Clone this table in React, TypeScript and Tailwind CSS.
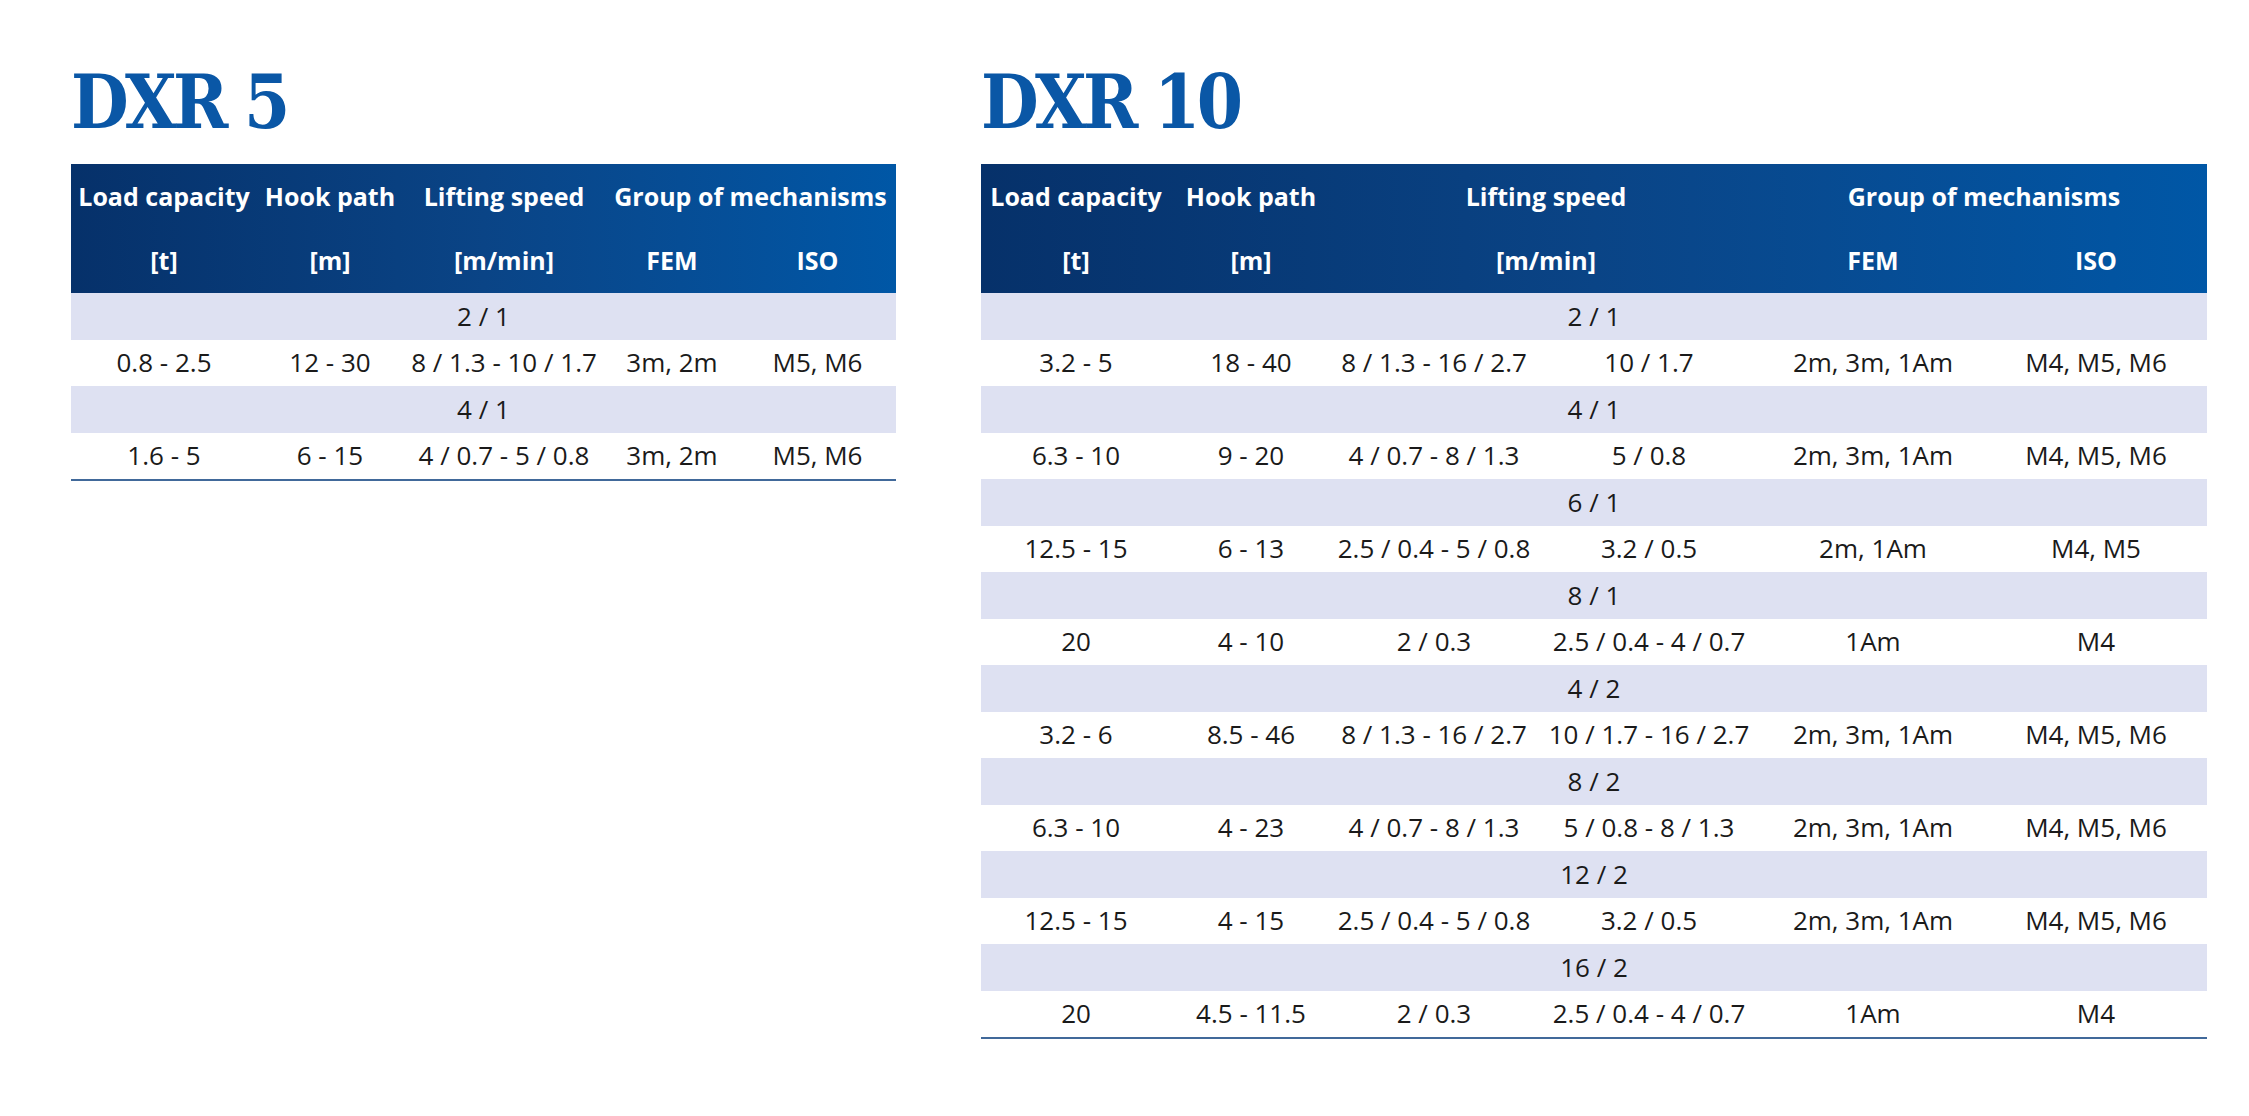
import React from 'react';

type Group = { ratio: string; cells: string[] };

const dxr5: Group[] = [
  { ratio: '2 / 1', cells: ['0.8 - 2.5', '12 - 30', '8 / 1.3 - 10 / 1.7', '3m, 2m', 'M5, M6'] },
  { ratio: '4 / 1', cells: ['1.6 - 5', '6 - 15', '4 / 0.7 - 5 / 0.8', '3m, 2m', 'M5, M6'] },
];

const dxr10: Group[] = [
  { ratio: '2 / 1', cells: ['3.2 - 5', '18 - 40', '8 / 1.3 - 16 / 2.7', '10 / 1.7', '2m, 3m, 1Am', 'M4, M5, M6'] },
  { ratio: '4 / 1', cells: ['6.3 - 10', '9 - 20', '4 / 0.7 - 8 / 1.3', '5 / 0.8', '2m, 3m, 1Am', 'M4, M5, M6'] },
  { ratio: '6 / 1', cells: ['12.5 - 15', '6 - 13', '2.5 / 0.4 - 5 / 0.8', '3.2 / 0.5', '2m, 1Am', 'M4, M5'] },
  { ratio: '8 / 1', cells: ['20', '4 - 10', '2 / 0.3', '2.5 / 0.4 - 4 / 0.7', '1Am', 'M4'] },
  { ratio: '4 / 2', cells: ['3.2 - 6', '8.5 - 46', '8 / 1.3 - 16 / 2.7', '10 / 1.7 - 16 / 2.7', '2m, 3m, 1Am', 'M4, M5, M6'] },
  { ratio: '8 / 2', cells: ['6.3 - 10', '4 - 23', '4 / 0.7 - 8 / 1.3', '5 / 0.8 - 8 / 1.3', '2m, 3m, 1Am', 'M4, M5, M6'] },
  { ratio: '12 / 2', cells: ['12.5 - 15', '4 - 15', '2.5 / 0.4 - 5 / 0.8', '3.2 / 0.5', '2m, 3m, 1Am', 'M4, M5, M6'] },
  { ratio: '16 / 2', cells: ['20', '4.5 - 11.5', '2 / 0.3', '2.5 / 0.4 - 4 / 0.7', '1Am', 'M4'] },
];

function Title({ children }: { children: React.ReactNode }) {
  return (
    <h1 className="h-[99px] font-['DejaVu_Serif_Condensed','DejaVu_Serif',serif] text-[74px] font-bold leading-none tracking-[-0.05em] text-[#0a57a6]">
      {children}
    </h1>
  );
}

function GroupRows({ groups, cols }: { groups: Group[]; cols: string }) {
  return (
    <div className="border-b-2 border-[#41699a]">
      {groups.map((g) => (
        <div key={g.ratio}>
          <div className="flex h-[46.5px] items-center justify-center bg-[#dee1f2]">{g.ratio}</div>
          <div className={`grid h-[46.5px] items-center text-center ${cols}`}>
            {g.cells.map((c, i) => (
              <div key={i} className="whitespace-nowrap">{c}</div>
            ))}
          </div>
        </div>
      ))}
    </div>
  );
}

export default function App() {
  const head = 'flex h-[64.5px] items-center justify-center whitespace-nowrap';
  return (
    <div className="flex h-[1116px] w-[2249px] gap-[85px] bg-white pl-[71px] pt-[65px] font-['Open_Sans',sans-serif] text-[26px] font-normal text-[#1a1a1a]">
      {/* DXR 5 */}
      <section className="w-[825px]">
        <Title>DXR 5</Title>
        <div className="grid grid-cols-[186px_146px_202px_134px_1fr] bg-linear-to-r from-[#06316a] via-[#0a4486] to-[#0057a6] text-[25px] font-bold text-white">
          <div className={head}>Load capacity</div>
          <div className={head}>Hook path</div>
          <div className={head}>Lifting speed</div>
          <div className={`col-span-2 ${head}`}>Group of mechanisms</div>
          <div className={head}>[t]</div>
          <div className={head}>[m]</div>
          <div className={head}>[m/min]</div>
          <div className={head}>FEM</div>
          <div className={head}>ISO</div>
        </div>
        <GroupRows groups={dxr5} cols="grid-cols-[186px_146px_202px_134px_1fr]" />
      </section>

      {/* DXR 10 */}
      <section className="w-[1226px]">
        <Title>DXR 10</Title>
        <div className="grid grid-cols-[190px_160px_206px_224px_224px_1fr] bg-linear-to-r from-[#06316a] via-[#0a4486] to-[#0057a6] text-[25px] font-bold text-white">
          <div className={head}>Load capacity</div>
          <div className={head}>Hook path</div>
          <div className={`col-span-2 ${head}`}>Lifting speed</div>
          <div className={`col-span-2 ${head}`}>Group of mechanisms</div>
          <div className={head}>[t]</div>
          <div className={head}>[m]</div>
          <div className={`col-span-2 ${head}`}>[m/min]</div>
          <div className={head}>FEM</div>
          <div className={head}>ISO</div>
        </div>
        <GroupRows groups={dxr10} cols="grid-cols-[190px_160px_206px_224px_224px_1fr]" />
      </section>
    </div>
  );
}
